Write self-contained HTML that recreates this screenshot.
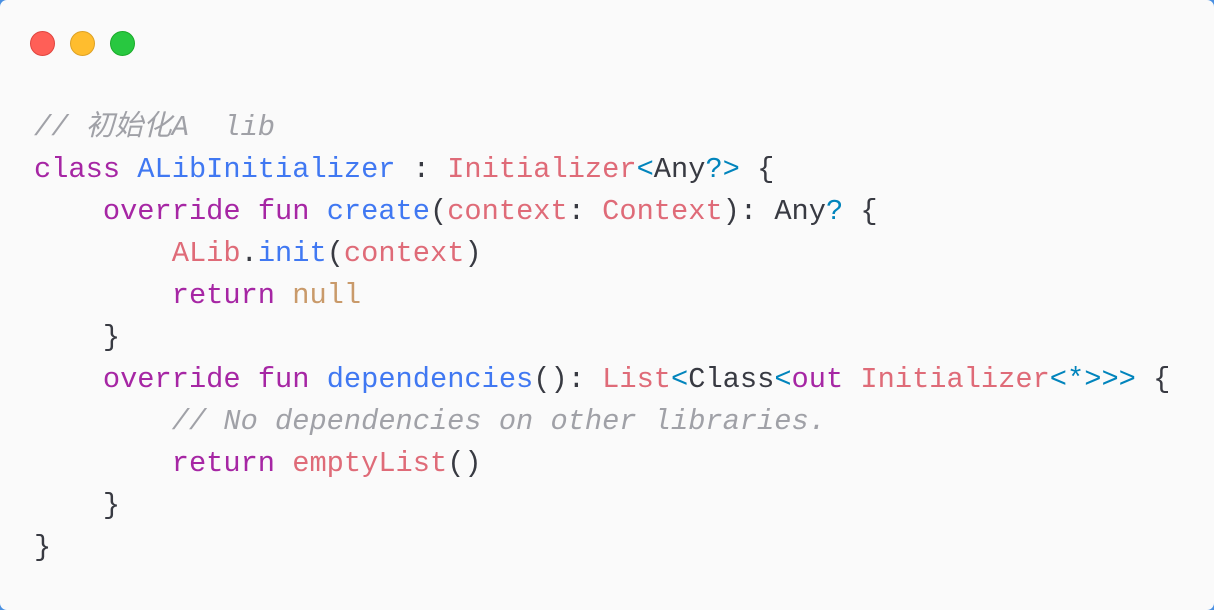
<!DOCTYPE html>
<html><head><meta charset="utf-8"><style>
html,body{margin:0;padding:0;width:1214px;height:610px;background:#4a90e2;overflow:hidden}
.win{position:absolute;left:0;top:0;width:1214px;height:610px;background:#fafafa;border-radius:7px}
.d{position:absolute;top:31px;width:25px;height:25px;border-radius:50%}
pre{position:absolute;left:34px;top:107px;margin:0;font-family:"Liberation Mono","Noto Sans CJK SC",monospace;font-size:28.7px;line-height:42px;color:#383a42}
.c{color:#a0a1a7;font-style:italic}.k{color:#a626a4}.f{color:#4078f2}.r{color:#df6b78}.o{color:#0184bc}.n{color:#c99a6a}
</style></head><body><div class="win">
<div class="d" style="left:30px;background:#ff5f57;border:1px solid #e0443e;box-sizing:border-box"></div>
<div class="d" style="left:70px;background:#ffbd2e;border:1px solid #dea123;box-sizing:border-box"></div>
<div class="d" style="left:110px;background:#28c840;border:1px solid #1aab29;box-sizing:border-box"></div>
<pre><span class="c">// 初始化A  lib</span>
<span class="k">class</span> <span class="f">ALibInitializer</span> : <span class="r">Initializer</span><span class="o">&lt;</span>Any<span class="o">?&gt;</span> {
    <span class="k">override fun</span> <span class="f">create</span>(<span class="r">context</span>: <span class="r">Context</span>): Any<span class="o">?</span> {
        <span class="r">ALib</span>.<span class="f">init</span>(<span class="r">context</span>)
        <span class="k">return</span> <span class="n">null</span>
    }
    <span class="k">override fun</span> <span class="f">dependencies</span>(): <span class="r">List</span><span class="o">&lt;</span>Class<span class="o">&lt;</span><span class="k">out</span> <span class="r">Initializer</span><span class="o">&lt;*&gt;&gt;&gt;</span> {
        <span class="c">// No dependencies on other libraries.</span>
        <span class="k">return</span> <span class="r">emptyList</span>()
    }
}</pre>
</div></body></html>
